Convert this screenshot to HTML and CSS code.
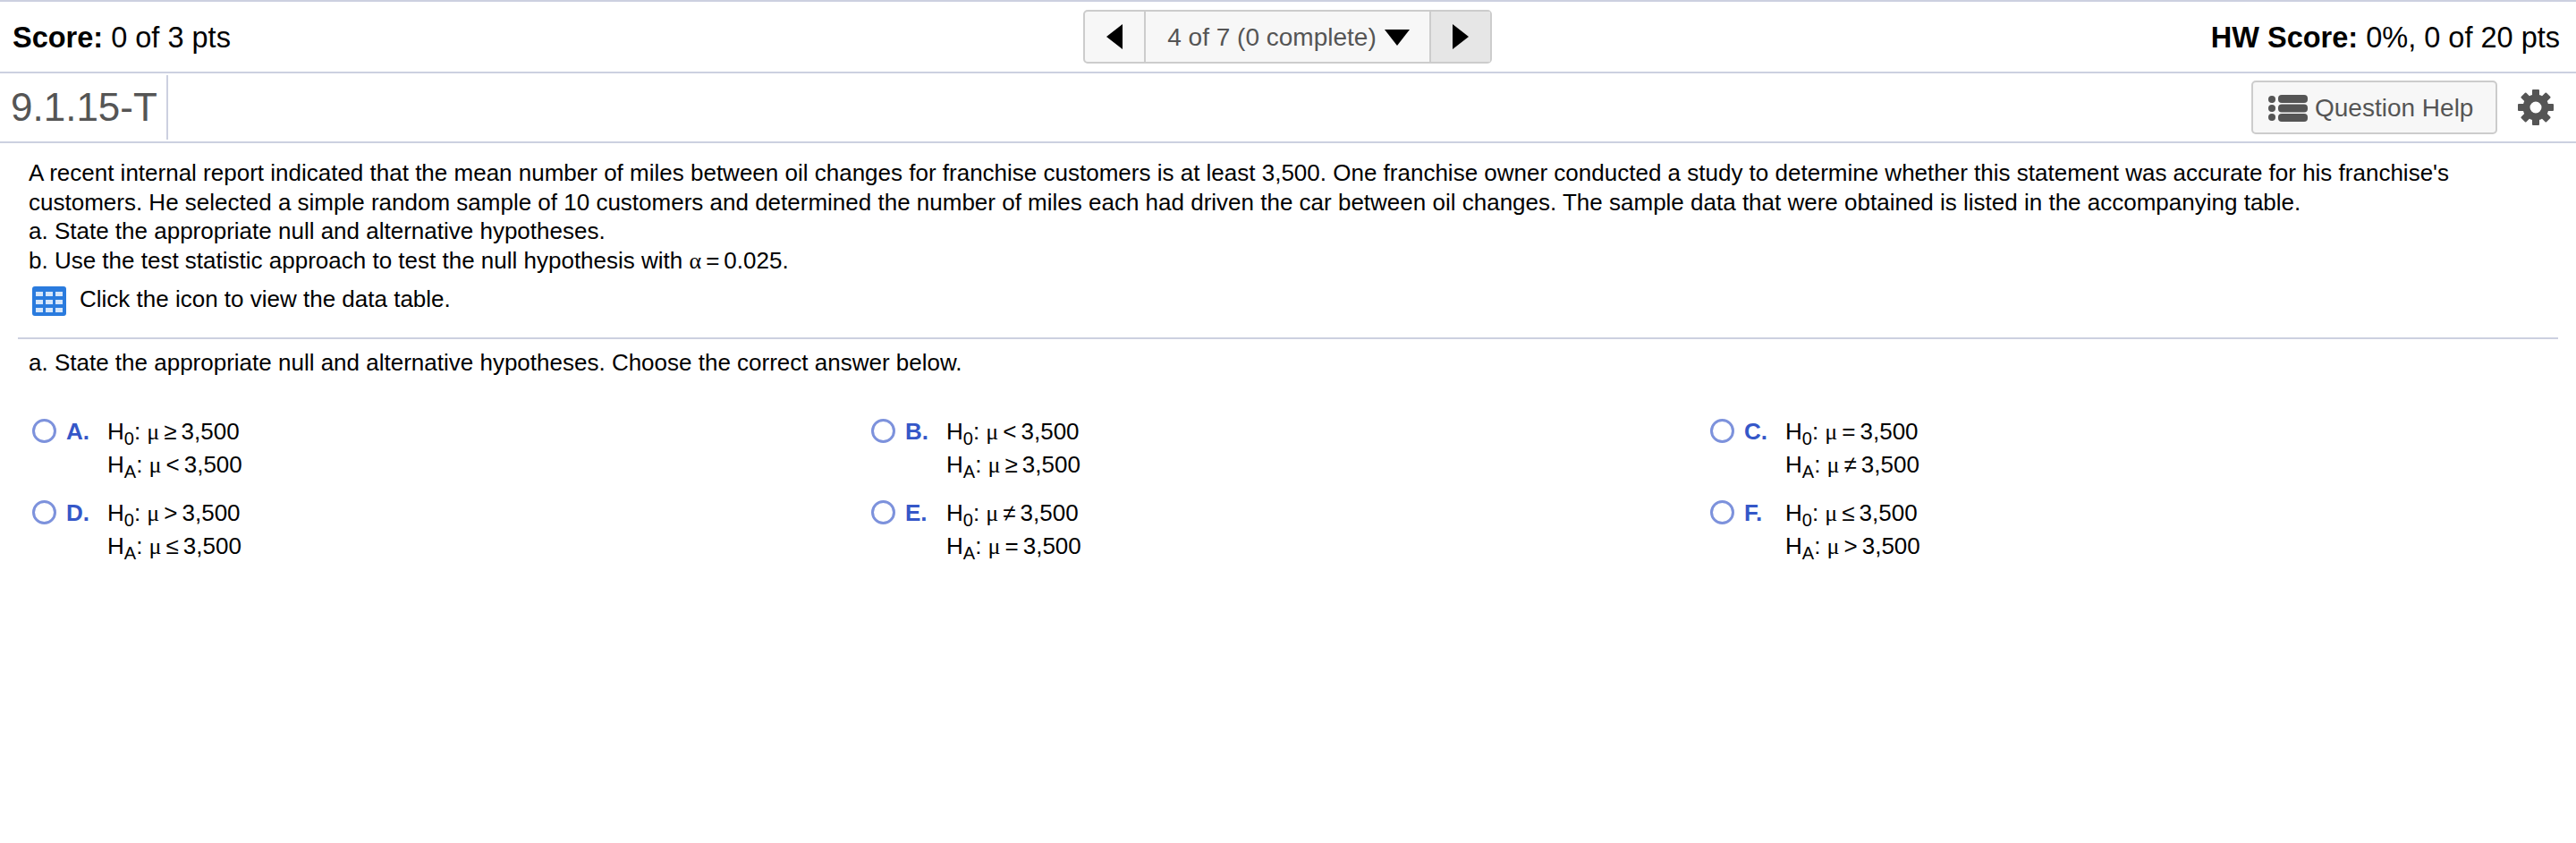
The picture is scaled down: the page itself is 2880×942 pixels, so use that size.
FILE: index.html
```html
<!DOCTYPE html>
<html lang="en">
<head>
    <meta charset="UTF-8">
    <title>Homework</title>
    <link rel="stylesheet" href="styles.css">
</head>
<body>
    <div class="score-bar">
        <div class="score"><b>Score:</b> 0 of 3 pts</div>
        <div class="pager">
            <button class="pager-btn pager-prev"><svg width="18" height="28" viewBox="0 0 18 28"><path d="M18 0V28L0 14Z"/></svg></button>
            <button class="pager-mid">4 of 7 (0 complete) <svg width="28" height="18" viewBox="0 0 28 18"><path d="M0 0H28L14 18Z"/></svg></button>
            <button class="pager-btn pager-next"><svg width="18" height="28" viewBox="0 0 18 28"><path d="M0 0V28L18 14Z"/></svg></button>
        </div>
        <div class="score score-right"><b>HW Score:</b> 0%, 0 of 20 pts</div>
    </div>
    <div class="title-bar">
        <div class="question-id">9.1.15-T</div>
        <div class="tools">
            <button class="help-btn">
                <svg width="44" height="30" viewBox="0 0 44 30" fill="#555"><circle cx="4" cy="5" r="4"/><circle cx="4" cy="15" r="4"/><circle cx="4" cy="25" r="4"/><rect x="11" y="0" width="33" height="9" rx="4"/><rect x="11" y="10.500" width="33" height="9" rx="4"/><rect x="11" y="21" width="33" height="9" rx="4"/></svg>
                Question Help
            </button>
            <svg class="gear" width="40" height="40" viewBox="0 0 40 40" fill="#555">
                <circle cx="20" cy="20" r="10.500" fill="none" stroke="#555" stroke-width="8"/>
                <rect x="16" y="0" width="8" height="8" rx="1"/>
                <rect x="16" y="0" width="8" height="8" rx="1" transform="rotate(45 20 20)"/>
                <rect x="16" y="0" width="8" height="8" rx="1" transform="rotate(90 20 20)"/>
                <rect x="16" y="0" width="8" height="8" rx="1" transform="rotate(135 20 20)"/>
                <rect x="16" y="0" width="8" height="8" rx="1" transform="rotate(180 20 20)"/>
                <rect x="16" y="0" width="8" height="8" rx="1" transform="rotate(225 20 20)"/>
                <rect x="16" y="0" width="8" height="8" rx="1" transform="rotate(270 20 20)"/>
                <rect x="16" y="0" width="8" height="8" rx="1" transform="rotate(315 20 20)"/>
            </svg>
        </div>
    </div>
    <div class="content">
        <div class="question">
            <p>A recent internal report indicated that the mean number of miles between oil changes for franchise customers is at least 3,500. One franchise owner conducted a study to determine whether this statement was accurate for his franchise's customers. He selected a simple random sample of 10 customers and determined the number of miles each had driven the car between oil changes. The sample data that were obtained is listed in the accompanying table.</p>
            <p>a. State the appropriate null and alternative hypotheses.</p>
            <p>b. Use the test statistic approach to test the null hypothesis with <span class="sym">α</span><span class="rel">=</span>0.025.</p>
            <div class="data-link">
                <svg width="38" height="33" viewBox="0 0 38 33"><rect width="38" height="33" rx="3" fill="#2a7bde"/><g fill="#d6e6fa"><rect x="4" y="6" width="8" height="5"/><rect x="15" y="6" width="8" height="5"/><rect x="26" y="6" width="8" height="5"/><rect x="4" y="15" width="8" height="5"/><rect x="15" y="15" width="8" height="5"/><rect x="26" y="15" width="8" height="5"/><rect x="4" y="24" width="8" height="5"/><rect x="15" y="24" width="8" height="5"/><rect x="26" y="24" width="8" height="5"/></g></svg>
                <span>Click the icon to view the data table.</span>
            </div>
        </div>
        <div class="prompt">a. State the appropriate null and alternative hypotheses. Choose the correct answer below.</div>
        <div class="options">
            <div class="option"><span class="radio"></span><span class="letter">A.</span><div class="hyp"><div>H<sub>0</sub>: <span class="sym">μ</span><span class="rel">≥</span>3,500</div><div>H<sub>A</sub>: <span class="sym">μ</span><span class="rel">&lt;</span>3,500</div></div></div>
            <div class="option"><span class="radio"></span><span class="letter">B.</span><div class="hyp"><div>H<sub>0</sub>: <span class="sym">μ</span><span class="rel">&lt;</span>3,500</div><div>H<sub>A</sub>: <span class="sym">μ</span><span class="rel">≥</span>3,500</div></div></div>
            <div class="option"><span class="radio"></span><span class="letter">C.</span><div class="hyp"><div>H<sub>0</sub>: <span class="sym">μ</span><span class="rel">=</span>3,500</div><div>H<sub>A</sub>: <span class="sym">μ</span><span class="rel">≠</span>3,500</div></div></div>
            <div class="option"><span class="radio"></span><span class="letter">D.</span><div class="hyp"><div>H<sub>0</sub>: <span class="sym">μ</span><span class="rel">&gt;</span>3,500</div><div>H<sub>A</sub>: <span class="sym">μ</span><span class="rel">≤</span>3,500</div></div></div>
            <div class="option"><span class="radio"></span><span class="letter">E.</span><div class="hyp"><div>H<sub>0</sub>: <span class="sym">μ</span><span class="rel">≠</span>3,500</div><div>H<sub>A</sub>: <span class="sym">μ</span><span class="rel">=</span>3,500</div></div></div>
            <div class="option"><span class="radio"></span><span class="letter">F.</span><div class="hyp"><div>H<sub>0</sub>: <span class="sym">μ</span><span class="rel">≤</span>3,500</div><div>H<sub>A</sub>: <span class="sym">μ</span><span class="rel">&gt;</span>3,500</div></div></div>
        </div>
    </div>
</body>
</html>
```

FILE: styles.css
```css
body {
    font-family: "Liberation Sans", Arial, sans-serif;
    margin: 0;
    background-color: #fff;
    color: #000;
    font-size: 26px;
}
button {
    font-family: inherit;
    cursor: pointer;
}
.score-bar {
    display: flex;
    justify-content: space-between;
    align-items: center;
    height: 76px;
    padding: 2px 14px 0;
    border-top: 2px solid #ccd0e0;
    border-bottom: 2px solid #ccd0e0;
}
.score {
    font-size: 32.500px;
    flex: 1;
}
.score-right {
    text-align: right;
    padding-right: 4px;
}
.pager {
    display: flex;
    height: 60px;
    margin: -2px 0 0 2px;
    box-sizing: border-box;
    border: 2px solid #ccc;
    border-radius: 5px;
    background-color: #f7f7f7;
}
.pager button {
    border: none;
    background: none;
    padding: 0;
    display: flex;
    align-items: center;
    justify-content: center;
}
.pager-btn {
    width: 66px;
}
.pager .pager-next {
    background-color: #e6e6e6;
}
.pager .pager-mid {
    width: 321px;
    gap: 9px;
    padding: 2px 0 0 3px;
    font-size: 28px;
    color: #555;
    border-left: 2px solid #ccc;
    border-right: 2px solid #ccc;
}
.title-bar {
    display: flex;
    justify-content: space-between;
    align-items: center;
    height: 76px;
    border-bottom: 2px solid #ccd0e0;
}
.question-id {
    font-size: 44px;
    color: #555;
    height: 72px;
    line-height: 72px;
    padding: 0 10px 0 12px;
    border-right: 2px solid #ccd0e0;
}
.tools {
    display: flex;
    align-items: center;
    gap: 23px;
    padding-right: 25px;
}
.help-btn {
    display: flex;
    align-items: center;
    gap: 8px;
    width: 275px;
    height: 60px;
    padding: 2px 0 0 17px;
    box-sizing: border-box;
    font-size: 28px;
    color: #555;
    background-color: #f7f7f7;
    border: 2px solid #ccc;
    border-radius: 5px;
}
.content {
    padding: 17px 20px 0 32px;
}
.question p {
    margin: 0;
    line-height: 32.500px;
}
.sym {
    font-family: "Liberation Serif", serif;
}
.rel {
    margin: 0 5px;
}
.data-link {
    display: flex;
    align-items: center;
    gap: 15px;
    margin-top: 12px;
    padding-left: 4px;
}
.data-link span {
    margin-top: -5px;
}
.prompt {
    margin: 24px 0 0 -12px;
    padding: 10px 0 0 12px;
    border-top: 2px solid #ccd0e0;
    line-height: 32px;
}
.options {
    display: grid;
    grid-template-columns: repeat(3, 938px);
    row-gap: 17px;
    margin-top: 43px;
    margin-left: 4px;
}
.option {
    display: flex;
}
.radio {
    width: 27px;
    height: 27px;
    box-sizing: border-box;
    border: 3px solid #7d92dc;
    border-radius: 50%;
    margin-top: 4px;
}
.letter {
    width: 46px;
    margin-left: 11px;
    font-weight: bold;
    color: #3557c8;
    line-height: 36px;
}
.hyp {
    line-height: 36px;
}
.hyp sub {
    font-size: 20px;
    line-height: 0;
}
```
